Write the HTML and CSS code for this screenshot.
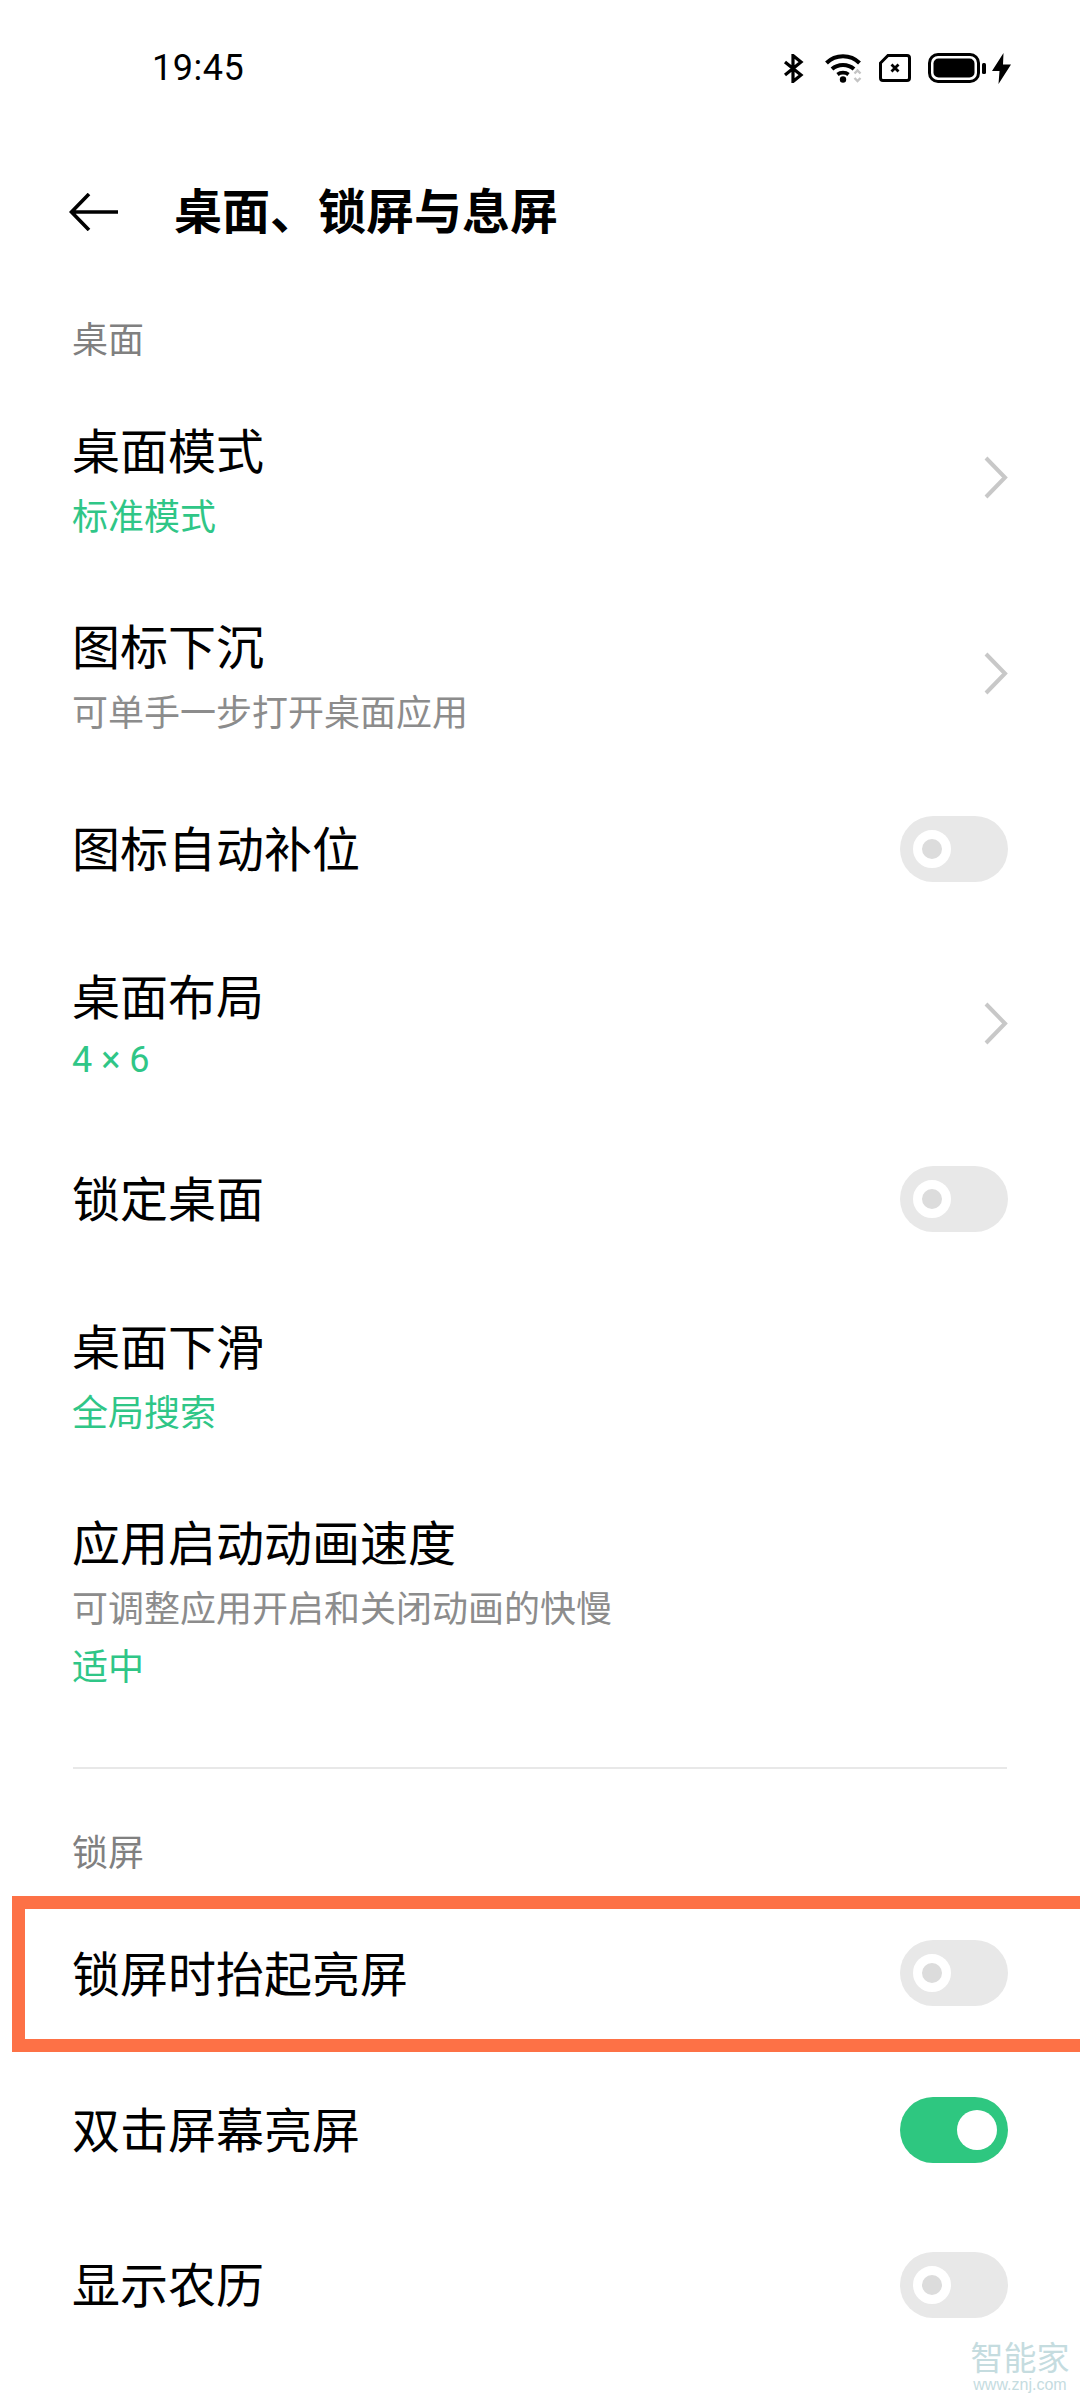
FILE: index.html
```html
<!DOCTYPE html>
<html>
<head>
<meta http-equiv="Content-Type" content="text/html; charset=utf-8"/>
<title>桌面、锁屏与息屏</title>
<link rel="stylesheet" href="styles.css">
</head>
<body>

<div class="status">
  <span class="time">19:45</span>
  <div class="status-icons">
    <svg class="ic-bt" width="21" height="29" viewBox="0 0 21 29"><path d="M2 8 L18 21 L10 27.5 V1.5 L18 8 L2 21" fill="none" stroke="#000" stroke-width="3.2"/></svg>
    <svg class="ic-wifi" width="37" height="30" viewBox="0 0 37 30">
      <path d="M1.5 10 C10.5 1 25.5 1 34.5 10" fill="none" stroke="#000" stroke-width="4"/>
      <path d="M7 16 C13 10.5 23 10.5 29 16" fill="none" stroke="#000" stroke-width="4"/>
      <path d="M12.5 21.5 C15.5 19 20.5 19 23.5 21.5" fill="none" stroke="#000" stroke-width="3.6"/>
      <circle cx="18" cy="26.5" r="3.2" fill="#000"/>
      <path d="M29.5 20.5 L32.5 17.5 L35.5 20.5 M29.5 25 L32.5 28 L35.5 25" fill="none" stroke="#c4c4c4" stroke-width="2.4"/>
    </svg>
    <svg class="ic-sim" width="32" height="28" viewBox="0 0 32 28">
      <path d="M9 1.5 H28 Q30.5 1.5 30.5 4 V24 Q30.5 26.5 28 26.5 H4 Q1.5 26.5 1.5 24 V9 Z" fill="none" stroke="#000" stroke-width="3"/>
      <path d="M12.5 10.5 L19.5 17.5 M19.5 10.5 L12.5 17.5" stroke="#000" stroke-width="2.8"/>
    </svg>
    <svg class="ic-bat" width="58" height="30" viewBox="0 0 58 30">
      <rect x="1.5" y="1.5" width="49" height="27" rx="8.5" fill="none" stroke="#000" stroke-width="3"/>
      <rect x="5.5" y="5.5" width="41" height="19" rx="5" fill="#000"/>
      <rect x="54" y="10" width="4" height="11" rx="1.5" fill="#000"/>
    </svg>
    <svg class="ic-bolt" width="19" height="31" viewBox="0 0 19 31"><path d="M11.5 0 L0 18 H7.5 L6.5 31 L19 11.5 H11 Z" fill="#000"/></svg>
  </div>
</div>

<div class="header">
  <svg class="back" width="49" height="38" viewBox="0 0 49 38"><path d="M49 19 H3 M20 1 L2.5 19 L20 37" fill="none" stroke="#000" stroke-width="3.6"/></svg>
  <h1 class="title">桌面、锁屏与息屏</h1>
</div>

<div class="group">
  <div class="section section-first">桌面</div>

  <div class="row row-tall">
    <div class="text">
      <div class="name">桌面模式</div>
      <div class="sub green">标准模式</div>
    </div>
    <svg class="chev" width="25" height="43" viewBox="0 0 25 43"><path d="M3 2 L22 21.5 L3 41" fill="none" stroke="#c8c8c8" stroke-width="4"/></svg>
  </div>

  <div class="row row-tall">
    <div class="text">
      <div class="name">图标下沉</div>
      <div class="sub">可单手一步打开桌面应用</div>
    </div>
    <svg class="chev" width="25" height="43" viewBox="0 0 25 43"><path d="M3 2 L22 21.5 L3 41" fill="none" stroke="#c8c8c8" stroke-width="4"/></svg>
  </div>

  <div class="row row-single">
    <div class="text">
      <div class="name">图标自动补位</div>
    </div>
    <div class="toggle"></div>
  </div>

  <div class="row row-tall">
    <div class="text">
      <div class="name">桌面布局</div>
      <div class="sub green num">4 × 6</div>
    </div>
    <svg class="chev" width="25" height="43" viewBox="0 0 25 43"><path d="M3 2 L22 21.5 L3 41" fill="none" stroke="#c8c8c8" stroke-width="4"/></svg>
  </div>

  <div class="row row-single">
    <div class="text">
      <div class="name">锁定桌面</div>
    </div>
    <div class="toggle"></div>
  </div>

  <div class="row row-tall">
    <div class="text">
      <div class="name">桌面下滑</div>
      <div class="sub green">全局搜索</div>
    </div>
  </div>

  <div class="row row-last">
    <div class="text">
      <div class="name">应用启动动画速度</div>
      <div class="sub">可调整应用开启和关闭动画的快慢</div>
      <div class="sub green">适中</div>
    </div>
  </div>

  <div class="divider"></div>

  <div class="section">锁屏</div>
</div>

<div class="highlight">
  <div class="text">
    <div class="name">锁屏时抬起亮屏</div>
  </div>
  <div class="toggle"></div>
</div>

<div class="row row-plain">
  <div class="text">
    <div class="name">双击屏幕亮屏</div>
  </div>
  <div class="toggle on"></div>
</div>

<div class="row row-plain">
  <div class="text">
    <div class="name">显示农历</div>
  </div>
  <div class="toggle"></div>
</div>

<div class="watermark">
  <div class="wm-name">智能家</div>
  <div class="wm-url">www.znj.com</div>
</div>

</body>
</html>
```

FILE: styles.css
```css
html, body {
  margin: 0;
  padding: 0;
  background: #fff;
}

body {
  width: 1080px;
  height: 2400px;
  position: relative;
  overflow: hidden;
  font-family: "Noto Sans CJK SC", "Noto Sans", sans-serif;
  color: #000;
}

.status {
  height: 136px;
  display: flex;
  align-items: center;
  justify-content: space-between;
  padding: 0 69px 0 152px;
}

.time {
  font-family: Roboto, sans-serif;
  font-size: 36px;
  letter-spacing: 0.5px;
}

.status-icons {
  display: flex;
  align-items: center;
  gap: 17px;
}

.ic-bt {
  margin-right: 4px;
}

.ic-bat {
  margin-right: -11px;
}

.header {
  height: 152px;
  display: flex;
  align-items: center;
  gap: 56px;
  padding-left: 69px;
}

.title {
  margin: 0 0 9px;
  font-size: 48px;
  font-weight: 700;
  line-height: 64px;
}

.group {
  padding-top: 9px;
}

.section {
  height: 86px;
  line-height: 80px;
  padding-left: 72px;
  font-size: 36px;
  color: #808080;
}

.section-first {
  margin-bottom: 9px;
}

.row {
  display: flex;
  align-items: center;
  justify-content: space-between;
  padding-left: 72px;
  padding-right: 72px;
}

.text {
  margin-bottom: 6px;
}

.row-tall {
  height: 196px;
  box-sizing: border-box;
  padding-top: 22px;
  padding-bottom: 42px;
}

.row-single {
  height: 154px;
  box-sizing: border-box;
  padding-top: 28px;
  padding-bottom: 52px;
}

.row-last {
  height: 283px;
  box-sizing: border-box;
  padding-top: 22px;
  padding-bottom: 71px;
}

.row-plain {
  height: 155px;
}

.name {
  font-size: 48px;
  line-height: 74px;
}

.sub {
  font-size: 36px;
  line-height: 58px;
  color: #8c8c8c;
}

.green {
  color: #2fc687;
}

.num {
  font-family: Roboto, sans-serif;
}

.chev {
  margin-bottom: 6px;
}

.toggle {
  width: 108px;
  height: 66px;
  border-radius: 33px;
  background: #e8e8e8;
  position: relative;
  flex: none;
}

.toggle::after {
  content: "";
  position: absolute;
  left: 13px;
  top: 14px;
  width: 20px;
  height: 20px;
  border: 9px solid #fff;
  border-radius: 50%;
  background: #dcdcdc;
}

.toggle.on {
  background: #2ec780;
}

.toggle.on::after {
  left: auto;
  right: 11px;
  top: 13px;
  width: 40px;
  height: 40px;
  border: 0;
  background: #fff;
}

.divider {
  height: 2px;
  margin: 0 73px 41px;
  background: #e8e8e8;
}

.highlight {
  height: 130px;
  margin-left: 12px;
  border: 13px solid #fd7146;
  border-right: 0;
  padding: 0 72px 0 47px;
  display: flex;
  align-items: center;
  justify-content: space-between;
}

.highlight .toggle {
  margin-bottom: 2px;
}

.watermark {
  position: absolute;
  right: 10px;
  top: 2338px;
  width: 100px;
  text-align: center;
  color: #c5dcdf;
}

.wm-name {
  font-size: 33px;
  line-height: 36px;
}

.wm-url {
  font-family: "Liberation Sans", sans-serif;
  font-size: 16px;
  line-height: 22px;
}
```
